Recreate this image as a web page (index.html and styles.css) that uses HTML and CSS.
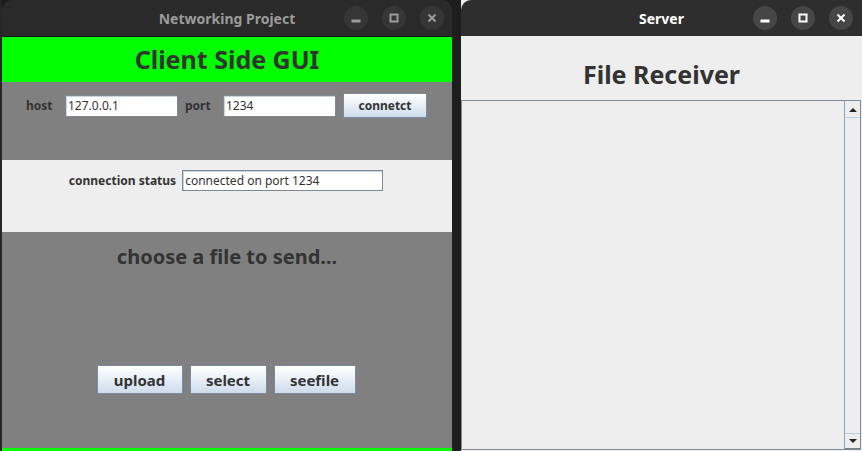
FILE: index.html
```html
<!DOCTYPE html>
<html>
<head>
<meta charset="utf-8">
<link rel="stylesheet" href="styles.css">
</head>
<body>
<div class="desktop">
  <div class="edge"></div>
  <div class="window win-left">
    <div class="titlebar tb-left">
      <span></span>
      <span class="title">Networking Project</span>
      <div class="controls">
        <span class="ctl"><svg width="10" height="10" viewBox="0 0 10 10"><rect x="1" y="7" width="8" height="2"/></svg></span>
        <span class="ctl"><svg width="10" height="10" viewBox="0 0 10 10"><rect x="1.5" y="1.5" width="7" height="7" fill="none" stroke-width="2"/></svg></span>
        <span class="ctl"><svg width="10" height="10" viewBox="0 0 10 10"><path d="M1.5 1.5L8.5 8.5M8.5 1.5L1.5 8.5" stroke-width="2" fill="none"/></svg></span>
      </div>
    </div>
    <div class="header-green">Client Side GUI</div>
    <div class="panel-gray row-conn">
      <span class="lbl lbl-host">host</span>
      <span class="field f-host">127.0.0.1</span>
      <span class="lbl lbl-port">port</span>
      <span class="field f-port">1234</span>
      <button class="jbtn b-connect">connetct</button>
    </div>
    <div class="panel-light row-status">
      <span class="lbl">connection status</span>
      <span class="field f-status">connected on port 1234</span>
    </div>
    <div class="panel-gray panel-file">
      <div class="choose">choose a file to send...</div>
      <div class="btn-row">
        <button class="jbtn b-upload">upload</button>
        <button class="jbtn b-select">select</button>
        <button class="jbtn b-seefile">seefile</button>
      </div>
    </div>
    <div class="green-bottom"></div>
  </div>
  <div class="gap"></div>
  <div class="window win-right">
    <div class="titlebar tb-right">
      <span></span>
      <span class="title">Server</span>
      <div class="controls">
        <span class="ctl"><svg width="10" height="10" viewBox="0 0 10 10"><rect x="1" y="7" width="8" height="2"/></svg></span>
        <span class="ctl"><svg width="10" height="10" viewBox="0 0 10 10"><rect x="1.5" y="1.5" width="7" height="7" fill="none" stroke-width="2"/></svg></span>
        <span class="ctl"><svg width="10" height="10" viewBox="0 0 10 10"><path d="M1.5 1.5L8.5 8.5M8.5 1.5L1.5 8.5" stroke-width="2" fill="none"/></svg></span>
      </div>
    </div>
    <div class="receiver-title">File Receiver</div>
    <div class="textarea">
      <div class="ta-content"></div>
      <div class="scrollbar">
        <div class="sb-btn sb-up"><span class="arrow-up"></span></div>
        <div class="sb-track"></div>
        <div class="sb-btn sb-down"><span class="arrow-down"></span></div>
      </div>
    </div>
  </div>
</div>
</body>
</html>
```
FILE: styles.css
```css
* { box-sizing: border-box; }
html, body { margin: 0; padding: 0; }
body {
  background: #1c1c1c;
  font-family: "Noto Sans", "DejaVu Sans", sans-serif;
  width: 862px;
  height: 451px;
  overflow: hidden;
}
.desktop {
  display: flex;
  height: 451px;
}
.edge {
  width: 2px;
  background: #262626;
}
.gap {
  width: 9px;
  background: #1e1e1e;
}
.window {
  display: flex;
  flex-direction: column;
  height: 451px;
}
.win-left { width: 450px; }
.win-right { width: 401px; background: #eeeeee; }

.titlebar {
  height: 36px;
  display: grid;
  grid-template-columns: 1fr auto 1fr;
  align-items: center;
  border-radius: 10px 10px 0 0;
  flex: none;
}
.tb-left {
  background: #2a2a2a;
  height: 37px;
  border-bottom: 1px solid #161616;
  color: #9b9b9b;
}
.tb-right {
  background: #2e2e2e;
  color: #ffffff;
  border-top-right-radius: 0;
}
.title {
  font-size: 14px;
  font-weight: 700;
}
.controls {
  justify-self: end;
  display: flex;
  gap: 14px;
  margin-right: 8px;
}
.tb-right .controls { margin-right: 9px; }
.ctl {
  width: 24px;
  height: 24px;
  border-radius: 50%;
  display: flex;
  align-items: center;
  justify-content: center;
}
.tb-left .ctl { background: #363636; }
.tb-right .ctl { background: #464646; }
.tb-left svg { fill: #9b9b9b; stroke: #9b9b9b; }
.tb-right svg { fill: #ffffff; stroke: #ffffff; }
.ctl svg rect[fill="none"] { fill: none; }
.ctl svg path { fill: none; }

.header-green {
  background: #00ff00;
  height: 45px;
  flex: none;
  display: flex;
  align-items: center;
  justify-content: center;
  font-size: 25px;
  font-weight: 700;
  color: #333333;
  padding-bottom: 2px;
}
.panel-gray { background: #808080; }
.panel-light { background: #eeeeee; }

.lbl {
  font-size: 12px;
  font-weight: 700;
  color: #333333;
}
.field {
  background: #ffffff;
  border: 1px solid #7a8a99;
  box-shadow: inset 1px 1px 0 #c8d4e0;
  font-size: 12px;
  color: #333333;
  height: 22px;
  line-height: 20px;
  padding-left: 2px;
  white-space: nowrap;
}
.row-conn {
  height: 78px;
  flex: none;
  display: flex;
  align-items: flex-start;
  padding: 11px 0 0 24px;
}
.row-conn .lbl { line-height: 25px; }
.row-conn .field { margin-top: 2px; width: 113px; }
.lbl-host { width: 25px; margin-right: 14px; }
.lbl-port { width: 24px; margin: 0 14px 0 7px; }
.b-connect {
  margin-left: 7px;
  width: 84px;
  height: 25px;
  font-size: 12px;
}

.row-status {
  height: 72px;
  flex: none;
  display: flex;
  justify-content: center;
  align-items: flex-start;
  padding-top: 10px;
  gap: 6px;
  padding-right: 2px;
}
.row-status .lbl { line-height: 21px; }
.f-status { width: 201px; height: 21px; line-height: 19px; }

.panel-file {
  height: 216px;
  flex: none;
  display: flex;
  flex-direction: column;
  align-items: center;
}
.choose {
  font-size: 20px;
  font-weight: 700;
  color: #333333;
  margin-top: 11px;
  line-height: 28px;
}
.btn-row {
  display: flex;
  gap: 7px;
  margin-top: 94px;
  padding-right: 2px;
}
.jbtn {
  font-family: "Noto Sans", "DejaVu Sans", sans-serif;
  font-weight: 700;
  color: #333333;
  border: 1px solid #7a8aa0;
  background: linear-gradient(to bottom, #ffffff 0%, #f4f7fb 25%, #dde7f2 70%, #cddbea 100%);
  padding: 0;
  border-radius: 0;
}
.b-upload, .b-select, .b-seefile { height: 29px; font-size: 15px; }
.b-upload { width: 86px; }
.b-select { width: 77px; }
.b-seefile { width: 82px; }
.green-bottom {
  background: #00ff00;
  height: 3px;
  flex: none;
}

.receiver-title {
  height: 64px;
  flex: none;
  display: flex;
  align-items: center;
  justify-content: center;
  font-size: 25px;
  font-weight: 700;
  color: #333333;
  padding-top: 11px;
}
.textarea {
  flex: none;
  height: 350px;
  width: 400px;
  border: 1px solid #7f8c99;
  display: flex;
  background: #eeeeee;
}
.ta-content { flex: 1; }
.scrollbar {
  width: 16px;
  border-left: 1px solid #8ea3b8;
  display: flex;
  flex-direction: column;
}
.sb-track {
  flex: 1;
  background: #eeeeee;
}
.sb-btn {
  height: 16px;
  display: flex;
  align-items: center;
  justify-content: center;
  background: #eeeeee;
}
.sb-up { border-bottom: 1px solid #b8cfe5; margin-top: 1px; }
.sb-down { border-top: 1px solid #b8cfe5; border-bottom: 1px solid #6e7f90; }
.arrow-up {
  width: 0; height: 0;
  border-left: 4px solid transparent;
  border-right: 4px solid transparent;
  border-bottom: 4px solid #222222;
}
.arrow-down {
  width: 0; height: 0;
  border-left: 4px solid transparent;
  border-right: 4px solid transparent;
  border-top: 4px solid #222222;
}
```
